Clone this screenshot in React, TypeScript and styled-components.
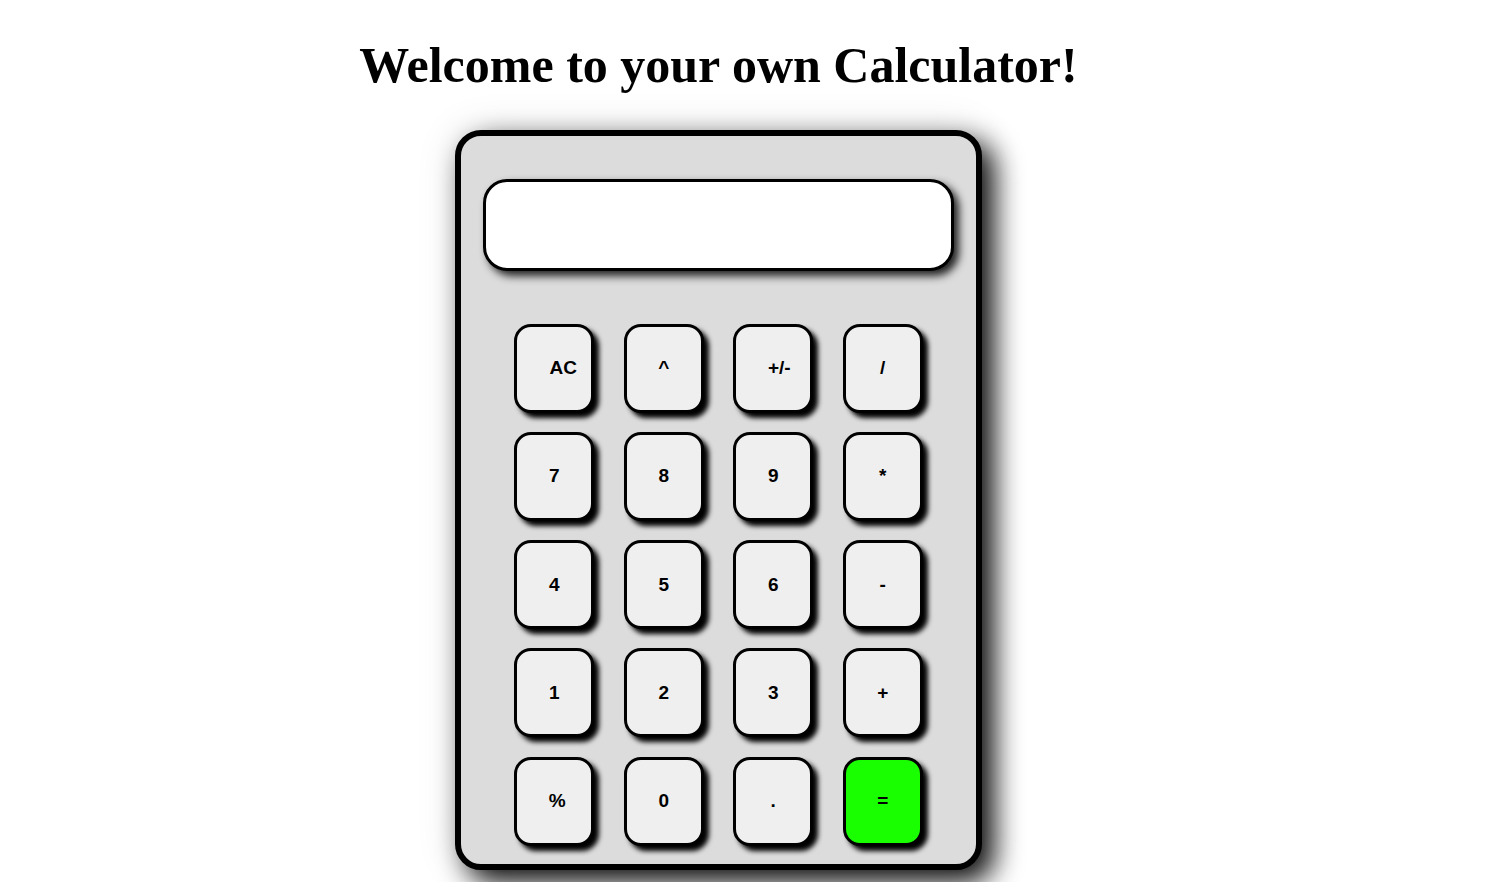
import React from 'react';
import styled, { createGlobalStyle } from 'styled-components';

const GlobalStyle = createGlobalStyle`
  html, body {
    margin: 0;
    padding: 0;
    background: #ffffff;
  }
`;

type Key = {
  label: string;
  shift?: number;
  accent?: boolean;
};

const keys: Key[] = [
  { label: 'AC', shift: 9 },
  { label: '^' },
  { label: '+/-', shift: 6 },
  { label: '/' },
  { label: '7' },
  { label: '8' },
  { label: '9' },
  { label: '*' },
  { label: '4' },
  { label: '5' },
  { label: '6' },
  { label: '-' },
  { label: '1' },
  { label: '2' },
  { label: '3' },
  { label: '+' },
  { label: '%', shift: 3 },
  { label: '0' },
  { label: '.' },
  { label: '=', accent: true },
];

const App: React.FC = () => {
  return (
    <Page>
      <GlobalStyle />
      <Title>Welcome to your own Calculator!</Title>
      <Body>
        <Display type="text" readOnly value="" />
        <Keypad>
          {keys.map(k => (
            <KeyButton key={k.label} $accent={k.accent} $shift={k.shift ?? 0}>
              {k.label}
            </KeyButton>
          ))}
        </Keypad>
      </Body>
    </Page>
  );
};

export default App;

const Page = styled.div`
  display: flex;
  flex-direction: column;
  align-items: center;
  padding-right: 60px;
  min-height: 882px;
  box-sizing: border-box;
  overflow: hidden;
`;

const Title = styled.h1`
  margin: 37px 0 0;
  font-family: 'Liberation Serif', 'Times New Roman', serif;
  font-weight: bold;
  font-size: 50px;
  line-height: 1.15;
  color: #000;
`;

const Body = styled.div`
  margin-top: 35px;
  width: 527px;
  height: 740px;
  box-sizing: border-box;
  border: 6px solid #000;
  border-radius: 26px;
  background: #dcdcdc;
  padding: 43px 22px 0;
  box-shadow: 12px 12px 28px rgba(0, 0, 0, 0.95), 0 0 40px rgba(0, 0, 0, 0.12);
  display: flex;
  flex-direction: column;
  align-items: center;
`;

const Display = styled.input`
  width: 471px;
  height: 92px;
  box-sizing: border-box;
  border: 3px solid #000;
  border-radius: 24px;
  background: #fff;
  box-shadow: 5px 5px 8px rgba(0, 0, 0, 0.85);
  outline: none;
  font-family: 'Liberation Sans', Arial, sans-serif;
  font-size: 32px;
  text-align: right;
  padding: 0 20px;
`;

const Keypad = styled.div`
  margin-top: 53px;
  display: grid;
  grid-template-columns: repeat(4, 80px);
  grid-auto-rows: 89px;
  column-gap: 29.5px;
  row-gap: 19.25px;
`;

const KeyButton = styled.button<{ $accent?: boolean; $shift: number }>`
  box-sizing: border-box;
  width: 80px;
  height: 89px;
  border: 3px solid #000;
  border-radius: 17px;
  background: ${p => (p.$accent ? '#1aff00' : '#efefef')};
  box-shadow: 5px 5px 5px #000;
  font-family: 'Liberation Sans', Arial, sans-serif;
  font-weight: bold;
  font-size: 19px;
  color: #000;
  padding: 0 0 0 ${p => p.$shift * 2}px;
  cursor: pointer;
`;
